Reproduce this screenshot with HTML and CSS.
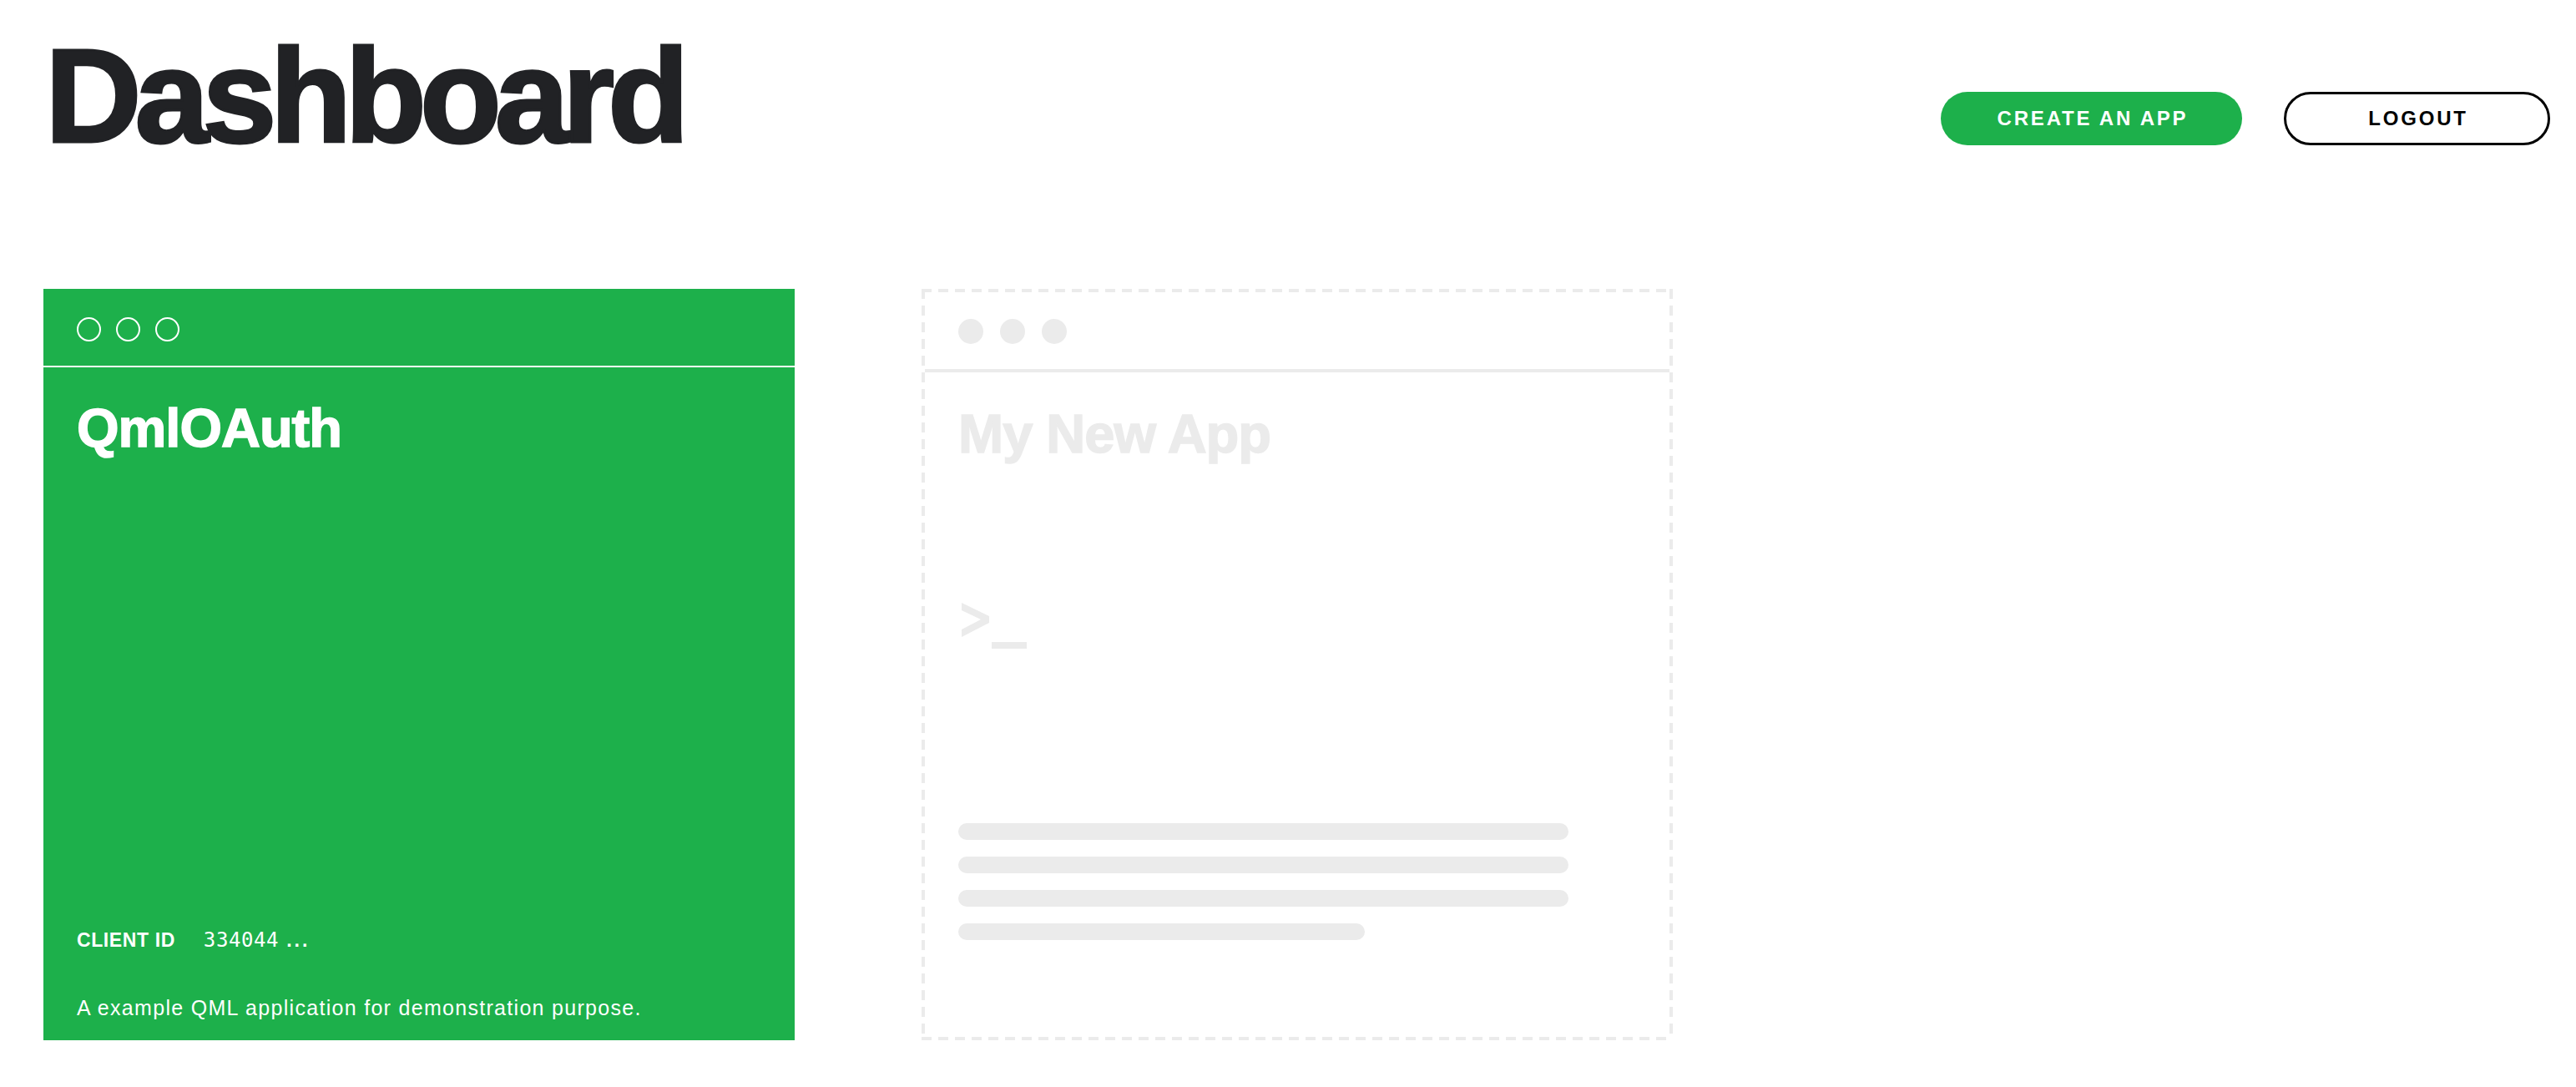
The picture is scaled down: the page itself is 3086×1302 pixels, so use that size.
FILE: index.html
```html
<!DOCTYPE html>
<html lang="en">
<head>
<meta charset="utf-8">
<title>Dashboard</title>
<link rel="stylesheet" href="styles.css">
</head>
<body>
<div class="page">
  <header class="top">
    <h1 class="page-title">Dashboard</h1>
    <nav class="actions">
      <a class="btn btn-primary" href="#">CREATE AN APP</a>
      <a class="btn btn-outline" href="#">LOGOUT</a>
    </nav>
  </header>
  <main class="apps">
    <article class="card card-app">
      <div class="card-head">
        <span class="ring"></span><span class="ring"></span><span class="ring"></span>
      </div>
      <div class="card-body">
        <h2 class="card-title">QmlOAuth</h2>
        <div class="card-foot">
          <p class="client-id">CLIENT ID<span class="mono">334044</span><span class="ellipsis">...</span></p>
          <p class="desc">A example QML application for demonstration purpose.</p>
        </div>
      </div>
    </article>
    <article class="card card-new">
      <div class="card-head">
        <span class="dot"></span><span class="dot"></span><span class="dot"></span>
      </div>
      <div class="card-body">
        <h2 class="card-title">My New App</h2>
        <svg class="prompt" width="86" height="56" viewBox="0 0 86 56" aria-hidden="true">
          <polygon points="6,0 39,16 39,24 6,41 6,32 29,20 6,9" fill="#ebebeb"/>
          <rect x="42" y="47" width="42" height="8" fill="#ebebeb"/>
        </svg>
        <div class="lines">
          <span class="line"></span>
          <span class="line"></span>
          <span class="line"></span>
          <span class="line line-short"></span>
        </div>
      </div>
    </article>
  </main>
</div>
</body>
</html>
```
FILE: styles.css
```css
html, body {
  margin: 0;
  padding: 0;
  background: #ffffff;
}

body {
  font-family: "Liberation Sans", Arial, sans-serif;
  color: #222326;
}

.page {
  padding: 35px 31px 0 53px;
}

.top {
  display: flex;
  justify-content: space-between;
  align-items: flex-start;
}

.page-title {
  margin: 0;
  font-size: 160px;
  line-height: 160px;
  font-weight: 700;
  letter-spacing: -8px;
  color: #212225;
  -webkit-text-stroke: 3px #212225;
  padding-left: 1px;
}

.actions {
  display: flex;
  gap: 50px;
  margin-top: 75px;
}

.btn {
  box-sizing: border-box;
  height: 64px;
  border-radius: 32px;
  display: flex;
  align-items: center;
  justify-content: center;
  font-size: 24px;
  font-weight: 700;
  letter-spacing: 2.8px;
  text-decoration: none;
  padding-left: 3px;
}

.btn-primary {
  width: 361px;
  background: #1db04b;
  color: #ffffff;
}

.btn-outline {
  width: 319px;
  border: 3px solid #000000;
  color: #000000;
  background: #ffffff;
}

.apps {
  display: flex;
  gap: 152px;
  margin-top: 151px;
  margin-left: -1px;
}

.card {
  box-sizing: border-box;
  width: 900px;
  height: 900px;
  display: flex;
  flex-direction: column;
}

.card-app {
  background: #1db04b;
  color: #ffffff;
}

.card-new {
  padding: 4px;
  color: #ebebeb;
  background:
    repeating-linear-gradient(90deg, #ebebeb 0 12px, transparent 12px 20px) left top / 100% 4px no-repeat,
    repeating-linear-gradient(90deg, #ebebeb 0 12px, transparent 12px 20px) left bottom / 100% 4px no-repeat,
    repeating-linear-gradient(180deg, #ebebeb 0 12px, transparent 12px 20px) left top / 4px 100% no-repeat,
    repeating-linear-gradient(180deg, #ebebeb 0 12px, transparent 12px 20px) right top / 4px 100% no-repeat;
}

.card-head {
  height: 58px;
  padding: 34px 40px 0;
  display: flex;
  align-items: flex-start;
}

.card-app .card-head {
  gap: 18px;
  border-bottom: 2px solid #ffffff;
}

.card-new .card-head {
  gap: 20px;
  height: 60px;
  padding-top: 32px;
  border-bottom: 4px solid #ebebeb;
}

.ring {
  box-sizing: border-box;
  width: 29px;
  height: 29px;
  border: 2px solid #ffffff;
  border-radius: 50%;
}

.dot {
  width: 30px;
  height: 30px;
  border-radius: 50%;
  background: #ebebeb;
}

.card-body {
  flex: 1;
  display: flex;
  flex-direction: column;
  padding: 40px 40px 26px;
}

.card-new .card-body {
  padding: 41px 40px 116px;
}

.card-title {
  margin: 0;
  font-size: 65px;
  line-height: 65px;
  font-weight: 700;
  letter-spacing: -1px;
  -webkit-text-stroke: 1.5px currentColor;
}

.card-foot {
  margin-top: auto;
}

.client-id {
  margin: 0;
  font-size: 23px;
  line-height: 23px;
  font-weight: 700;
  letter-spacing: 0.6px;
}

.mono {
  font-family: "DejaVu Sans Mono", "Liberation Mono", monospace;
  font-weight: 400;
  font-size: 24px;
  letter-spacing: 0.6px;
  margin-left: 34px;
}

.ellipsis {
  margin-left: 9px;
  letter-spacing: 3px;
}

.desc {
  margin: 57px 0 0;
  font-size: 25px;
  line-height: 25px;
  font-weight: 400;
  letter-spacing: 1.3px;
}

.prompt {
  display: block;
  margin-top: 170px;
  margin-left: -2px;
}

.lines {
  margin-top: auto;
  display: flex;
  flex-direction: column;
  gap: 20px;
}

.line {
  display: block;
  width: 90%;
  height: 20px;
  border-radius: 10px;
  background: #ebebeb;
}

.line-short {
  width: 60%;
}
```
